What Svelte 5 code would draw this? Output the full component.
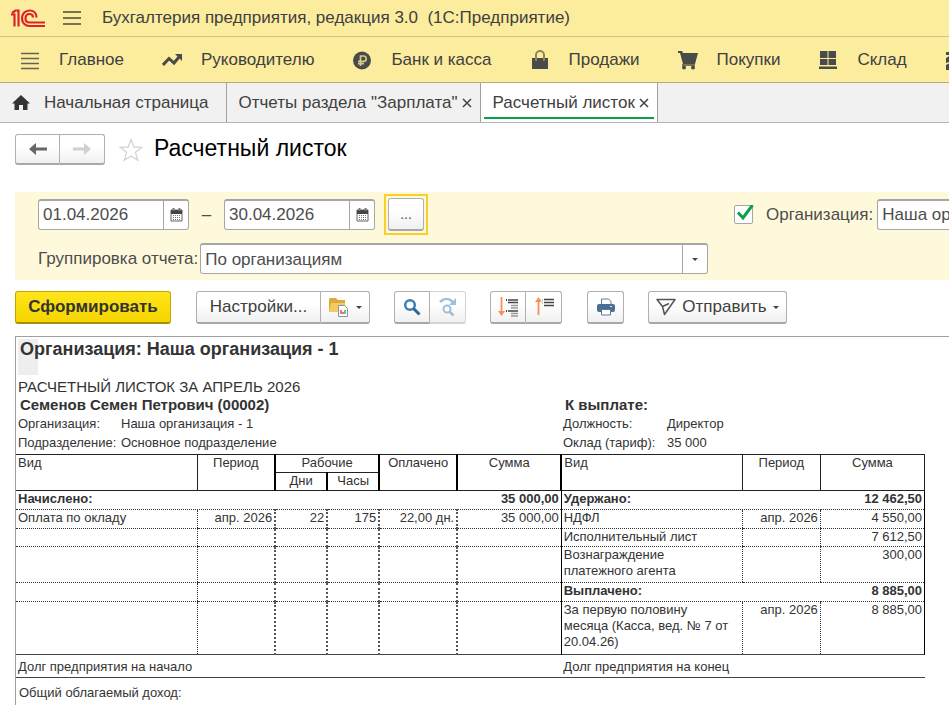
<script>
  const sections = [
    { icon: 'list', title: 'Главное' },
    { icon: 'trend', title: 'Руководителю' },
    { icon: 'ruble', title: 'Банк и касса' },
    { icon: 'bag', title: 'Продажи' },
    { icon: 'cart', title: 'Покупки' },
    { icon: 'stock', title: 'Склад' },
    { icon: 'works' }
  ];

  const columns = [181, 78, 52, 52, 78, 104, 181, 78, 104];

  const emptyLeft = { cells: ['', '', '', '', '', ''] };

  const rows = [
    {
      height: 19,
      left: { total: 'Начислено:', sum: '35 000,00' },
      right: { total: 'Удержано:', sum: '12 462,50' }
    },
    {
      height: 19,
      left: { cells: ['Оплата по окладу', 'апр. 2026', '22', '175', '22,00 дн.', '35 000,00'] },
      right: { cells: ['НДФЛ', 'апр. 2026', '4 550,00'] }
    },
    {
      height: 18,
      left: emptyLeft,
      right: { cells: ['Исполнительный лист', '', '7 612,50'] }
    },
    {
      height: 36,
      left: emptyLeft,
      right: { cells: ['Вознаграждение платежного агента', '', '300,00'] }
    },
    {
      height: 19,
      left: emptyLeft,
      right: { total: 'Выплачено:', sum: '8 885,00' }
    },
    {
      height: 53,
      left: emptyLeft,
      right: { cells: ['За первую половину месяца (Касса, вед. № 7 от 20.04.26)', 'апр. 2026', '8 885,00'] }
    }
  ];

  let dateFrom = $state('01.04.2026');
  let dateTo = $state('30.04.2026');
  let grouping = $state('По организациям');
  let useOrganization = $state(true);
  let organization = $state('Наша организация - 1');
</script>

{#snippet calendar()}
  <svg width="13" height="14" viewBox="0 0 13 14">
    <path d="M1 2h11v11H1z" fill="#fff" stroke="#666" />
    <path d="M1 2h11v4H1z" fill="#444" />
    <path d="M3.500 0v3M9.500 0v3" stroke="#777" stroke-width="2" />
    <path d="M3 7.500h7M3 9.500h7M3 11.500h7" stroke="#777" stroke-dasharray="1 1" />
  </svg>
{/snippet}

{#snippet dateField(id, label, value, oninput)}
  <div class="field date">
    <input {id} type="text" aria-label={label} {value} {oninput} />
    <button aria-label="Выбрать дату">{@render calendar()}</button>
  </div>
{/snippet}

{#snippet close()}
  <svg width="10" height="10" viewBox="0 0 10 10">
    <path d="M1 1l8 8M9 1l-8 8" stroke="#444" stroke-width="1.500" />
  </svg>
{/snippet}

{#snippet half(side, position)}
  {#if side.total}
    <th class="total" scope="row" colspan={position === 'left' ? 5 : 2}>{side.total}</th>
    <td class="num total">{side.sum}</td>
  {:else}
    {#each side.cells as cell, i}
      <td class:num={i > 0} class:thick={position === 'left' && i > 1} class:first={i === 0}>{cell}</td>
    {/each}
  {/if}
{/snippet}

<div class="app">
  <header class="titlebar">
    <svg class="logo" width="34" height="19" viewBox="0 0 34 19">
      <g fill="none" stroke="#dc2328" stroke-width="2.200">
        <path d="M0 5.500h3.500v12M1 4l3.500-2.500h3v16" />
        <path d="M25.500 8.500c0-4.500-3-7-7-7-4.500 0-7.500 3.500-7.500 8 0 4.200 3 7.500 7.500 7.500H34" />
        <path d="M22 8.500c0-2.200-1.500-3.500-3.500-3.500-2.500 0-4 2-4 4.500s1.500 4 4 4H34" />
      </g>
    </svg>
    <button class="burger" aria-label="Главное меню">
      <svg width="18" height="16" viewBox="0 0 18 16">
        <path d="M0 2h18M0 8h18M0 14h18" stroke="#77724f" stroke-width="2" />
      </svg>
    </button>
    <span>Бухгалтерия предприятия, редакция 3.0&nbsp; (1С:Предприятие)</span>
  </header>

  <nav class="sections">
    {#each sections as section}
      <a href="#{section.icon}" aria-label={section.title ?? 'Производство'}>
        <svg width="20" height="20" viewBox="0 0 20 20">
          {#if section.icon === 'list'}
            <path d="M1 3.500h18M1 8.500h18M1 13.500h18M1 18.500h18" stroke="#666352" stroke-width="1.500" />
          {:else if section.icon === 'trend'}
            <path d="M1 15l6-6.500 5 4.500 5-6" fill="none" stroke="#4a4a48" stroke-width="3" />
            <path d="M13 4h7v7z" fill="#4a4a48" />
          {:else if section.icon === 'ruble'}
            <circle cx="10" cy="10.500" r="9" fill="#4a4a48" />
            <path d="M8.500 16V6h3a2.700 2.700 0 0 1 0 5.400H6M6 13.700h6" fill="none" stroke="#d5c98c" stroke-width="1.700" />
          {:else if section.icon === 'bag'}
            <path d="M2 8h16v11H2z" fill="#4a4a48" />
            <path d="M6 11V5a4 4 0 0 1 8 0v6" fill="none" stroke="#8c855f" stroke-width="2" />
          {:else if section.icon === 'cart'}
            <path d="M0 1h4l1 2h15l-3 11H5L2 3H0z" fill="#4a4a48" />
            <path d="M4 15h13" stroke="#4a4a48" stroke-width="1.500" />
            <circle cx="6" cy="17.500" r="2" fill="#4a4a48" />
            <circle cx="15" cy="17.500" r="2" fill="#4a4a48" />
          {:else if section.icon === 'stock'}
            <path d="M2 1h7.500v7H2zM10.500 1H18v7h-7.500zM2 9h7.500v6H2zM10.500 9H18v6h-7.500zM1 16.500h18V19H1z" fill="#4a4a48" />
          {:else}
            <path d="M1 2h18v5l-9 3-9 3V8l5-3H1zM1 15l8-4 10 2v7H1z" fill="#4a4a48" />
          {/if}
        </svg>
        {#if section.title}{section.title}{/if}
      </a>
    {/each}
  </nav>

  <div class="tabs">
    <div class="tab home">
      <svg width="18" height="16" viewBox="0 0 18 16">
        <path d="M9 0l9 8.500h-2.500V15H11v-5H7v5H2.500V8.500H0z" fill="#333" />
      </svg>
      <button>Начальная страница</button>
    </div>
    <div class="tab">
      <button>Отчеты раздела "Зарплата"</button>
      <button aria-label="Закрыть">{@render close()}</button>
    </div>
    <div class="tab active">
      <button>Расчетный листок</button>
      <button aria-label="Закрыть">{@render close()}</button>
    </div>
  </div>

  <main>
    <div class="heading">
      <div class="group">
        <button class="btn back" aria-label="Назад">
          <svg width="18" height="14" viewBox="0 0 18 14">
            <path d="M0 7l7-6v4.500h11v3H7V13z" fill="#666" />
          </svg>
        </button>
        <button class="btn back" aria-label="Вперед">
          <svg width="18" height="14" viewBox="0 0 18 14">
            <path d="M18 7l-7-6v4.500H0v3h11V13z" fill="#d0d0d0" />
          </svg>
        </button>
      </div>
      <button class="star" aria-label="Добавить в избранное">
        <svg width="24" height="24" viewBox="0 0 24 24">
          <path d="M12 1.500l2.800 7.500 8 .3-6.300 5 2.200 8L12 18l-6.700 4.300 2.200-8-6.300-5 8-.3z" fill="#fff" stroke="#d4d4d4" stroke-width="1.300" />
        </svg>
      </button>
      <h1>Расчетный листок</h1>
    </div>

    <section class="filters">
      <div class="row">
        {@render dateField('from', 'Начало периода', dateFrom, (e) => (dateFrom = e.target.value))}
        <span class="dash">–</span>
        {@render dateField('to', 'Конец периода', dateTo, (e) => (dateTo = e.target.value))}
        <div class="focus-frame">
          <button class="btn period" aria-label="Выбрать период">...</button>
        </div>
        <div class="organization">
          <label class="check">
            <input type="checkbox" aria-label="Отбор по организации" bind:checked={useOrganization} />
            <svg width="20" height="20" viewBox="0 0 20 20">
              {#if useOrganization}
                <path d="M4 7.500l5 5.500L18.500 0" fill="none" stroke="#0b9f4b" stroke-width="3" />
              {/if}
            </svg>
          </label>
          <label for="organization">Организация:</label>
          <div class="field">
            <input id="organization" type="text" bind:value={organization} />
          </div>
        </div>
      </div>
      <div class="row second">
        <label for="grouping">Группировка отчета:</label>
        <div class="field grouping">
          <select id="grouping" bind:value={grouping}>
            <option>По организациям</option>
            <option>По подразделениям</option>
          </select>
          <span class="arrow"><i class="caret"></i></span>
        </div>
      </div>
    </section>

    <div class="toolbar">
      <button class="btn primary">Сформировать</button>
      <div class="group">
        <button class="btn settings">Настройки...</button>
        <button class="btn variants" aria-label="Варианты отчета">
          <svg width="20" height="20" viewBox="0 0 20 20">
            <path d="M1 4V2l1-1h6l2 2h7v12H1z" fill="#dca93c" />
            <path d="M3 6h14l-1 9H1z" fill="#f3cb62" />
            <path d="M10.500 8.500h6l3 3v8h-9z" fill="#fff" stroke="#8593a3" />
            <path d="M13 17v-4M15 17v-2" stroke="#e04b3f" stroke-width="1.500" />
            <path d="M17 17v-4" stroke="#44a75a" stroke-width="1.500" />
          </svg>
          <i class="caret"></i>
        </button>
      </div>
      <div class="group">
        <button class="btn tool" aria-label="Найти">
          <svg width="18" height="18" viewBox="0 0 18 18">
            <circle cx="7" cy="7" r="4.800" fill="#fff" stroke="#3c7fb4" stroke-width="2.500" />
            <path d="M10.500 10.500l6 6" stroke="#2e6795" stroke-width="3" />
          </svg>
        </button>
        <button class="btn tool pale" aria-label="Найти далее">
          <svg width="18" height="20" viewBox="0 0 18 20">
            <path d="M1 5c4-4 9-4 13 0" fill="none" stroke="#9fc0d8" stroke-width="2.500" />
            <path d="M17 1v7h-7z" fill="#9fc0d8" />
            <circle cx="8" cy="12" r="3.500" fill="#fff" stroke="#9fc0d8" stroke-width="2" />
            <path d="M10.500 14.500l4 4" stroke="#9fc0d8" stroke-width="2.500" />
          </svg>
        </button>
      </div>
      <div class="group">
        <button class="btn tool" aria-label="Развернуть группы">
          <svg width="20" height="20" viewBox="0 0 20 20">
            <path d="M3.500 0v16" stroke="#f9905c" stroke-width="1.800" />
            <path d="M0 14h7l-3.500 5z" fill="#f9905c" />
            <path d="M8 3h1M8 14h1" stroke="#444" stroke-width="2" />
            <path d="M10 3h10M10 5.500h10M10 14h10" stroke="#444" stroke-width="1.500" />
            <path d="M13 8.500h7M13 11h7M13 16.500h7M13 19h7" stroke="#999" stroke-width="1.500" />
          </svg>
        </button>
        <button class="btn tool" aria-label="Свернуть группы">
          <svg width="20" height="20" viewBox="0 0 20 20">
            <path d="M4.500 3v15" stroke="#f9905c" stroke-width="1.800" />
            <path d="M1 5h7L4.500 0z" fill="#f9905c" />
            <path d="M8 3h1M8 6h1" stroke="#888" />
            <path d="M10 2.500h10M10 5.500h10M10 8.500h10" stroke="#444" stroke-width="1.500" />
          </svg>
        </button>
      </div>
      <button class="btn tool print" aria-label="Печать">
        <svg width="18" height="18" viewBox="0 0 18 18">
          <path d="M4.500 7V1h7l2.500 2.500V7" fill="#fff" stroke="#587b9c" />
          <rect x="0" y="6" width="18" height="8" rx="2" fill="#4a6f95" />
          <path d="M4.500 11.500h9v5.500h-9z" fill="#fff" stroke="#587b9c" />
          <path d="M13 8.500h2" stroke="#dce7f0" />
        </svg>
      </button>
      <button class="btn send">
        <svg width="20" height="18" viewBox="0 0 20 18">
          <path d="M1 1.500h18L8.500 16.500 6.500 8.500zM6.500 8.500l6.500-3" fill="none" stroke="#555" stroke-width="1.500" stroke-linejoin="round" />
        </svg>
        Отправить
        <i class="caret"></i>
      </button>
    </div>

    <section class="report">
      <h2>Организация: Наша организация - 1</h2>
      <div class="slip-head">
        <div class="slip-title">РАСЧЕТНЫЙ ЛИСТОК ЗА АПРЕЛЬ 2026</div>
        <div class="name">Семенов Семен Петрович (00002)</div>
        <div class="name">К выплате:</div>
        <span>Организация:</span><span>Наша организация - 1</span>
        <span>Должность:</span><span>Директор</span>
        <span>Подразделение:</span><span>Основное подразделение</span>
        <span>Оклад (тариф):</span><span>35 000</span>
      </div>

      <table>
        <colgroup>
          {#each columns as width}
            <col style="width: {width}px" />
          {/each}
        </colgroup>
        <thead>
          <tr>
            <th class="kind" rowspan="2">Вид</th>
            <th rowspan="2">Период</th>
            <th class="thick" colspan="2">Рабочие</th>
            <th class="thick" rowspan="2">Оплачено</th>
            <th class="thick" rowspan="2">Сумма</th>
            <th class="kind thick" rowspan="2">Вид</th>
            <th rowspan="2">Период</th>
            <th rowspan="2">Сумма</th>
          </tr>
          <tr>
            <th class="thick">Дни</th>
            <th class="thick">Часы</th>
          </tr>
        </thead>
        <tbody>
          {#each rows as row}
            <tr style="height: {row.height}px">
              {@render half(row.left, 'left')}
              {@render half(row.right, 'right')}
            </tr>
          {/each}
        </tbody>
        <tfoot>
          <tr>
            <td colspan="6">Долг предприятия на начало</td>
            <td colspan="3">Долг предприятия на конец</td>
          </tr>
        </tfoot>
      </table>
      <p>Общий облагаемый доход:</p>
    </section>
  </main>
</div>

<style>
  :global(body) {
    margin: 0;
    background: #fff;
  }

  .app {
    height: 100vh;
    display: flex;
    flex-direction: column;
    overflow: hidden;
    font-family: "Liberation Sans", Arial, sans-serif;
    font-size: 17px;
    color: #404040;
    white-space: nowrap;
  }

  button,
  input,
  select {
    box-sizing: border-box;
    font: inherit;
    color: inherit;
    margin: 0;
    padding: 0;
    border: none;
    background: none;
  }

  button {
    cursor: pointer;
  }

  svg {
    display: block;
    flex: none;
  }

  .titlebar {
    display: flex;
    align-items: center;
    flex: none;
    height: 36px;
    padding-left: 11px;
    background: #fbec9e;
    border-bottom: 1px solid #cfc383;
  }

  .burger {
    margin: 0 21px 0 18px;
  }

  .sections {
    display: flex;
    align-items: center;
    flex: none;
    gap: 38px;
    height: 45px;
    padding-left: 20px;
    background: #fbec9e;
    border-bottom: 1px solid #b5ab76;
  }

  .sections a {
    display: flex;
    align-items: center;
    flex: none;
    gap: 19px;
    color: inherit;
    text-decoration: none;
  }

  .tabs {
    display: flex;
    flex: none;
    height: 39px;
    background: #f1f1f1;
    border-bottom: 1px solid #b4b4b4;
  }

  .tab {
    display: flex;
    align-items: center;
    gap: 4px;
    padding: 0 8px 0 12px;
    border-right: 1px solid #a0a0a0;
  }

  .tab.home {
    gap: 14px;
    padding-right: 17px;
  }

  .tab.active {
    position: relative;
    background: #fff;
  }

  .tab.active::after {
    content: "";
    position: absolute;
    left: 3px;
    right: 3px;
    bottom: 3px;
    height: 2px;
    background: #0b9f4b;
  }

  main {
    display: flex;
    flex-direction: column;
    flex: 1;
    min-height: 0;
    padding: 11px 0 0 15px;
  }

  .group {
    display: flex;
  }

  .btn {
    box-sizing: border-box;
    display: flex;
    align-items: center;
    justify-content: center;
    flex: none;
    height: 33px;
    border: 1px solid #b0b0b0;
    border-bottom: 2px solid #a8a8a8;
    border-radius: 3px;
    background: linear-gradient(#fff 40%, #f0f0f0);
  }

  .group .btn:first-child {
    border-radius: 3px 0 0 3px;
  }

  .group .btn:last-child {
    border-left: none;
    border-radius: 0 3px 3px 0;
  }

  .heading {
    display: flex;
    align-items: center;
  }

  .btn.back {
    width: 45px;
    height: 31px;
  }

  .star {
    margin: 0 11px 0 14px;
  }

  h1 {
    margin: 0;
    padding-bottom: 3px;
    font-size: 23px;
    line-height: 28px;
    font-weight: normal;
    color: #000;
  }

  .filters {
    box-sizing: border-box;
    height: 88px;
    margin-top: 27px;
    padding: 2px 0 0 23px;
    overflow: hidden;
    background: #fff9db;
    color: #4d4d4d;
  }

  .row {
    display: flex;
    align-items: center;
  }

  .row.second {
    gap: 2px;
    margin-top: 8px;
  }

  .field {
    box-sizing: border-box;
    display: flex;
    flex: none;
    height: 31px;
    border: 1px solid #a6a6a6;
    border-top-width: 2px;
    border-radius: 3px;
    background: #fff;
  }

  .field input,
  .field select {
    flex: 1;
    min-width: 0;
    padding: 0 4px;
    appearance: none;
    outline: none;
  }

  .date {
    width: 151px;
  }

  .date button {
    display: flex;
    align-items: center;
    justify-content: center;
    width: 25px;
    border-left: 1px solid #a6a6a6;
  }

  .dash {
    flex: none;
    width: 35px;
    text-align: center;
  }

  .focus-frame {
    flex: none;
    margin-left: 9px;
    padding: 2px;
    border: 2px solid #fbcf2b;
  }

  .period {
    width: 36px;
    font-size: 14px;
  }

  .organization {
    display: flex;
    align-items: center;
    flex: none;
    margin-left: 306px;
  }

  .organization .field {
    width: 240px;
    margin-left: 4px;
  }

  .check {
    display: grid;
    margin-right: 12px;
  }

  .check input,
  .check svg {
    grid-area: 1 / 1;
  }

  .check input {
    width: 19px;
    height: 19px;
    appearance: none;
    border: 1px solid #a6a6a6;
    border-radius: 2px;
    background: #fff;
  }

  .check svg {
    pointer-events: none;
  }

  .grouping {
    position: relative;
    width: 508px;
  }

  .grouping .arrow {
    position: absolute;
    top: 0;
    right: 0;
    bottom: 0;
    display: flex;
    align-items: center;
    justify-content: center;
    width: 24px;
    border-left: 1px solid #a6a6a6;
    pointer-events: none;
  }

  .caret {
    border: 3px solid transparent;
    border-top: 3px solid #444;
    border-bottom: none;
  }

  .toolbar {
    display: flex;
    gap: 24px;
    margin-top: 11px;
  }

  .primary {
    width: 156px;
    margin-right: 1px;
    border-color: #c5a600;
    border-bottom-color: #a88e00;
    background: linear-gradient(#ffe51a, #f5d500);
    font-weight: bold;
    color: #333;
  }

  .settings {
    width: 125px;
  }

  .variants {
    gap: 8px;
    width: 49px;
  }

  .tool {
    width: 36px;
  }

  .print {
    width: 37px;
    margin-left: 1px;
  }

  .pale {
    border-color: #d4d4d4;
  }

  .send {
    gap: 6px;
    width: 139px;
  }

  .report {
    flex: 1;
    min-height: 0;
    margin-top: 12px;
    border-top: 1px solid #a0a0a0;
    border-left: 1px solid #a0a0a0;
    font-size: 13px;
    line-height: 16px;
    color: #333;
  }

  h2 {
    height: 36px;
    margin: 2px 0 3px 2px;
    padding-left: 2px;
    background: linear-gradient(#eee, #eee) no-repeat 0 0 / 20px 100%;
    font-size: 18px;
    line-height: 20px;
  }

  .slip-head {
    display: grid;
    grid-template-columns: 103px 442px 104px 1fr;
    padding: 0 0 2px 2px;
    line-height: 19px;
  }

  .slip-title {
    grid-column: 1 / -1;
    font-size: 15px;
    line-height: 18px;
  }

  .name {
    grid-column: span 2;
    padding-left: 2px;
    font-size: 15px;
    line-height: 18px;
    font-weight: bold;
  }

  table {
    width: 909px;
    table-layout: fixed;
    border-collapse: collapse;
  }

  th,
  td {
    padding: 0 2px;
    vertical-align: top;
    text-align: left;
    white-space: normal;
  }

  thead th {
    height: 17px;
    border: 1px solid #222;
    font-weight: normal;
    text-align: center;
  }

  thead th.kind {
    text-align: left;
  }

  thead th:first-child:not(.thick) {
    border-left: none;
  }

  thead th.thick {
    border-left: 2px solid #000;
  }

  tbody td,
  tbody th {
    border-bottom: 1px dotted #333;
    border-left: 1px dotted #333;
  }

  tbody td.first {
    padding-right: 8px;
  }

  tbody td.thick {
    border-left: 2px dotted #555;
  }

  tbody .num {
    text-align: right;
  }

  tbody .total {
    border-left: none;
    font-weight: bold;
  }

  tbody .num + .first,
  tbody .num + th {
    border-left: 1px solid #000;
  }

  tbody tr > :first-child {
    border-left: none;
  }

  tbody tr > :last-child {
    border-right: 1px solid #000;
  }

  tfoot td {
    height: 18px;
    padding-top: 4px;
    border-top: 1px solid #444;
    border-bottom: 1px solid #444;
  }

  p {
    margin: 7px 0 0 3px;
  }
</style>
